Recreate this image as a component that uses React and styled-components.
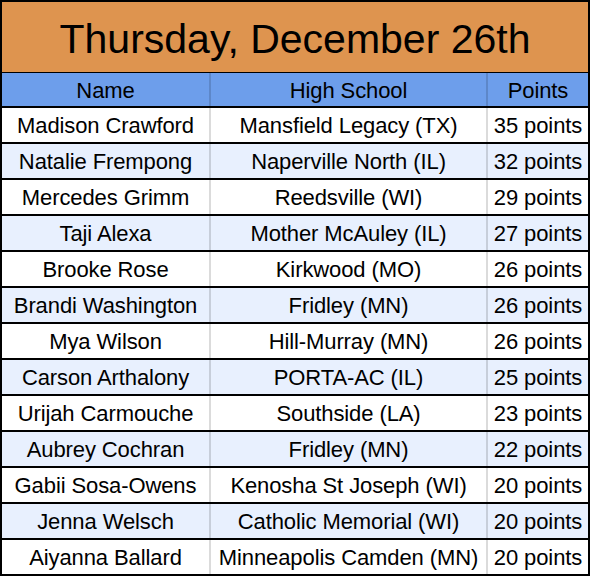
import React from 'react';
import styled, { createGlobalStyle } from 'styled-components';

const GlobalStyle = createGlobalStyle`
    html, body {
        margin: 0;
        padding: 0;
        background: #fff;
    }
    * {
        box-sizing: border-box;
    }
`;

const Sheet = styled.div`
    width: 590px;
    height: 576px;
    border: 2px solid #000;
    font-family: "Liberation Sans", Arial, sans-serif;
    color: #000;
    display: flex;
    flex-direction: column;
    overflow: hidden;
`;

const Title = styled.div`
    height: 70px;
    background: #de944f;
    display: flex;
    align-items: center;
    justify-content: center;
    font-size: 41px;
    padding-top: 4px;
`;

const Row = styled.div`
    display: grid;
    grid-template-columns: 207px 277px 1fr;
    height: ${(p) => (p.head ? '34px' : '36px')};
    border-top: ${(p) => (p.head ? '1px' : '2px')} solid #000;
    background: ${(p) => (p.head ? '#6d9eeb' : p.alt ? '#e8f0fe' : '#fff')};
`;

const Cell = styled.div`
    display: flex;
    align-items: center;
    justify-content: center;
    font-size: 22px;
    letter-spacing: -0.1px;
    padding-top: 2px;
    white-space: nowrap;
    border-left: ${(p) => (p.first ? 'none' : '2px solid rgba(0, 0, 0, 0.14)')};
`;

const players = [
    ['Madison Crawford', 'Mansfield Legacy (TX)', 35],
    ['Natalie Frempong', 'Naperville North (IL)', 32],
    ['Mercedes Grimm', 'Reedsville (WI)', 29],
    ['Taji Alexa', 'Mother McAuley (IL)', 27],
    ['Brooke Rose', 'Kirkwood (MO)', 26],
    ['Brandi Washington', 'Fridley (MN)', 26],
    ['Mya Wilson', 'Hill-Murray (MN)', 26],
    ['Carson Arthalony', 'PORTA-AC (IL)', 25],
    ['Urijah Carmouche', 'Southside (LA)', 23],
    ['Aubrey Cochran', 'Fridley (MN)', 22],
    ['Gabii Sosa-Owens', 'Kenosha St Joseph (WI)', 20],
    ['Jenna Welsch', 'Catholic Memorial (WI)', 20],
    ['Aiyanna Ballard', 'Minneapolis Camden (MN)', 20],
];

const App = () => {
    return (
        <>
            <GlobalStyle />
            <Sheet>
                <Title>Thursday, December 26th</Title>
                <Row head>
                    <Cell first>Name</Cell>
                    <Cell>High School</Cell>
                    <Cell>Points</Cell>
                </Row>
                {players.map((item, index) => (
                    <Row key={index} alt={index % 2 === 1}>
                        <Cell first>{item[0]}</Cell>
                        <Cell>{item[1]}</Cell>
                        <Cell>{item[2]} points</Cell>
                    </Row>
                ))}
            </Sheet>
        </>
    );
};

export default App;
